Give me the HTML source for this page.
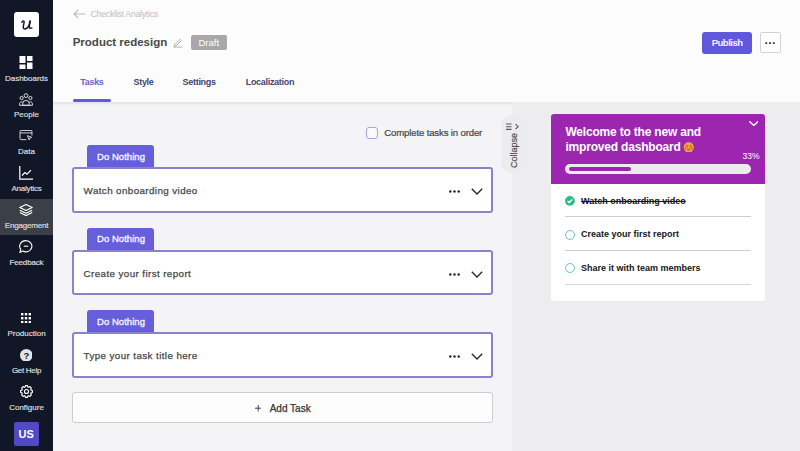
<!DOCTYPE html>
<html><head><meta charset="utf-8">
<style>
*{margin:0;padding:0;box-sizing:border-box}
html,body{width:800px;height:451px;overflow:hidden;background:#f4f4f6;font-family:"Liberation Sans",sans-serif}
.a{position:absolute}
.t{position:absolute;white-space:nowrap;line-height:1}
#side{left:0;top:0;width:53px;height:451px;background:#111726}
.sl{color:#d9dbdf;font-size:8px;left:0;width:53px;text-align:center;-webkit-text-stroke:0.2px #d9dbdf}
.ic{position:absolute;left:19px;width:14px;height:14px}
#hdr{left:53px;top:0;width:747px;height:102px;background:#fcfcfd;box-shadow:0 1.5px 2px rgba(0,0,10,.07)}
#right{left:512px;top:102px;width:288px;height:349px;background:#edecef}
.tab{position:absolute;left:87px;width:67px;height:23px;background:#675edc;border-radius:3px 3px 0 0}
.tabt{color:#f4f3ff;font-size:9.5px;left:97px;letter-spacing:0.05px;-webkit-text-stroke:0.35px #f4f3ff}
.card{position:absolute;left:72px;width:421px;height:45.5px;background:#fff;border:2px solid #8a82cf;border-radius:3px}
.ct{color:#474747;font-size:9.8px;left:83.6px;letter-spacing:0.4px;-webkit-text-stroke:0.25px #474747}
.dots{position:absolute;left:449px;width:11px;height:3px}
.chev{position:absolute;left:471px;width:12px;height:7px}
.li{color:#141414;font-size:9px;font-weight:bold;left:581px}
.circ{position:absolute;left:565px;width:10px;height:10px;border-radius:50%;border:1.2px solid #6cc9a8}
.div{position:absolute;left:565px;width:186px;height:1px;background:#cfcfd2}
</style></head><body>
<div id="side" class="a">
  <div class="a" style="left:14px;top:12px;width:25px;height:25px;background:#fff;border-radius:3px"></div>
  <svg class="a" style="left:20.5px;top:19.5px;width:12px;height:10px" viewBox="0 0 12 10" fill="none" stroke="#111726" stroke-width="1.45" stroke-linecap="round" stroke-linejoin="round"><path d="M0.9 2.3Q1.9 0.6 2.9 1.3Q3.3 1.7 3 2.8L2.3 6.3Q1.9 8.9 4.1 8.9Q6.6 8.9 8 5.3L9.1 1.1"/><path d="M9.1 1.1L8.3 6.6Q7.9 9 10.9 7.9"/></svg>

  <!-- dashboards -->
  <svg class="ic" style="top:56px;height:13px" viewBox="0 0 14 13"><rect x="0.5" y="0" width="6" height="7" fill="#fff"/><rect x="8" y="0" width="5.5" height="5" fill="#fff"/><rect x="0.5" y="8.5" width="6" height="4.5" fill="#fff"/><rect x="8" y="6.5" width="5.5" height="6.5" fill="#fff"/></svg>
  <div class="t sl" style="top:74.5px">Dashboards</div>

  <!-- people -->
  <svg class="ic" style="top:93px;height:13px" viewBox="0 0 14 13" fill="none" stroke="#e2e3e6" stroke-width="0.95"><circle cx="7" cy="2.6" r="1.9"/><circle cx="2.6" cy="5" r="1.6"/><circle cx="11.4" cy="5" r="1.6"/><path d="M3.8 12.3v-2.2a3.2 2.6 0 0 1 6.4 0v2.2z"/><path d="M0.6 12.3v-1.7a2 1.8 0 0 1 3-1.5M13.4 12.3v-1.7a2 1.8 0 0 0 -3-1.5M0.6 12.3h12.8"/></svg>
  <div class="t sl" style="top:111.3px">People</div>

  <!-- data -->
  <svg class="ic" style="top:130.3px;height:11px" viewBox="0 0 14 12" fill="none" stroke="#e2e3e6" stroke-width="1"><path d="M7.5 10.5H1.5a1 1 0 0 1-1-1V1.5a1 1 0 0 1 1-1h11a1 1 0 0 1 1 1v4.5"/><path d="M0.5 3.2h13"/><path d="M8.6 6.2l4.6 1.8-2 .8-.8 2z"/></svg>
  <div class="t sl" style="top:148.1px">Data</div>

  <!-- analytics -->
  <svg class="ic" style="top:166px" viewBox="0 0 14 14" fill="none" stroke="#fff" stroke-width="1.2"><path d="M0.8 0v13.2H14"/><path d="M3 9.5l3-3 2 1.6 4-4"/></svg>
  <div class="t sl" style="top:185.3px;letter-spacing:-0.2px">Analytics</div>

  <div class="a" style="left:0;top:198.5px;width:53px;height:36.8px;background:#3b3f47"></div>
  <!-- engagement -->
  <svg class="ic" style="top:203.5px;height:12px" viewBox="0 0 14 12" fill="none" stroke="#fff" stroke-width="1.1" stroke-linejoin="round"><path d="M7 0.6l6.2 3-6.2 3-6.2-3z"/><path d="M0.8 6.2l6.2 3 6.2-3"/><path d="M0.8 8.6l6.2 3 6.2-3"/></svg>
  <div class="t sl" style="top:222.0px;letter-spacing:-0.2px">Engagement</div>

  <!-- feedback -->
  <svg class="ic" style="top:240px;height:13px" viewBox="0 0 14 13" fill="none" stroke="#fff" stroke-width="1.1"><path d="M7 0.6a6 5.6 0 1 1-3.2 10.4L0.9 12.4l.9-3A6 5.6 0 0 1 7 .6z"/><path d="M4.8 6.2h4.4"/></svg>
  <div class="t sl" style="top:258.5px;letter-spacing:-0.15px">Feedback</div>

  <!-- production -->
  <svg class="ic" style="top:312.5px;left:21px;width:10px;height:10.5px" viewBox="0 0 10 10.5" fill="#fff"><rect x="0" y="0" width="2.4" height="2.4"/><rect x="3.8" y="0" width="2.4" height="2.4"/><rect x="7.6" y="0" width="2.4" height="2.4"/><rect x="0" y="4" width="2.4" height="2.4"/><rect x="3.8" y="4" width="2.4" height="2.4"/><rect x="7.6" y="4" width="2.4" height="2.4"/><rect x="0" y="8" width="2.4" height="2.4"/><rect x="3.8" y="8" width="2.4" height="2.4"/><rect x="7.6" y="8" width="2.4" height="2.4"/></svg>
  <div class="t sl" style="top:330.2px">Production</div>

  <!-- help -->
  <svg class="ic" style="top:348.5px;left:19.8px;width:12.6px;height:12.6px" viewBox="0 0 12.6 12.6"><circle cx="6.3" cy="6.3" r="6.3" fill="#e4e4e7"/><text x="6.3" y="10" text-anchor="middle" font-family="Liberation Sans" font-weight="bold" font-size="9.5" fill="#111726">?</text></svg>
  <div class="t sl" style="top:367.1px;letter-spacing:-0.3px">Get Help</div>

  <!-- configure -->
  <svg class="ic" style="top:385px;left:19.7px;width:13px;height:13px" viewBox="0 0 13 13" fill="none" stroke="#fff" stroke-width="1.15" stroke-linejoin="round"><path d="M10.99 5.11 L12.41 5.48 L12.41 7.52 L10.99 7.89 L10.66 8.69 L11.40 9.96 L9.96 11.40 L8.69 10.66 L7.89 10.99 L7.52 12.41 L5.48 12.41 L5.11 10.99 L4.31 10.66 L3.04 11.40 L1.60 9.96 L2.34 8.69 L2.01 7.89 L0.59 7.52 L0.59 5.48 L2.01 5.11 L2.34 4.31 L1.60 3.04 L3.04 1.60 L4.31 2.34 L5.11 2.01 L5.48 0.59 L7.52 0.59 L7.89 2.01 L8.69 2.34 L9.96 1.60 L11.40 3.04 L10.66 4.31Z"/><circle cx="6.5" cy="6.5" r="2"/></svg>
  <div class="t sl" style="top:403.9px">Configure</div>

  <div class="a" style="left:14px;top:422px;width:24.5px;height:24px;background:#5249c4;border-radius:2px"></div>
  <div class="t" style="left:14px;top:429px;width:24.5px;text-align:center;color:#fff;font-weight:bold;font-size:11px">US</div>
</div>

<div id="hdr" class="a"></div>
<!-- back arrow -->
<svg class="a" style="left:72.5px;top:9px;width:13px;height:10px" viewBox="0 0 13 10" fill="none" stroke="#b9b9bc" stroke-width="1.1"><path d="M12.6 5H1M5.2 0.8L1 5l4.2 4.2"/></svg>
<div class="t" style="left:90.4px;top:10.2px;font-size:9px;letter-spacing:-0.37px;color:#c0c0c3">Checklist Analytics</div>
<div class="t" style="left:72.7px;top:36.5px;font-size:11.5px;font-weight:bold;color:#484848">Product redesign</div>
<svg class="a" style="left:172.5px;top:38px;width:9.5px;height:9.5px" viewBox="0 0 10 10" fill="none" stroke="#9a9a9e" stroke-width="0.9"><path d="M1.5 7.2L7.3 1.4l1.4 1.4L2.9 8.6 1.2 8.9z"/><path d="M0.5 9.6h9" stroke="#aaa"/></svg>
<div class="a" style="left:191px;top:35px;width:36px;height:15px;background:#a8a8aa;border-radius:2px"></div>
<div class="t" style="left:198.5px;top:38.1px;font-size:9.5px;letter-spacing:0px;color:#fff">Draft</div>

<div class="t" style="left:80.2px;top:77.9px;font-size:9px;font-weight:bold;letter-spacing:-0.3px;color:#6b62c9">Tasks</div>
<div class="a" style="left:72.7px;top:99.2px;width:38.3px;height:2.6px;background:#625ad6;border-radius:2px"></div>
<div class="t" style="left:133.5px;top:77.9px;font-size:9px;font-weight:bold;letter-spacing:-0.3px;color:#44446e">Style</div>
<div class="t" style="left:182.6px;top:77.9px;font-size:9px;font-weight:bold;letter-spacing:-0.3px;color:#44446e">Settings</div>
<div class="t" style="left:245.7px;top:77.9px;font-size:9px;font-weight:bold;letter-spacing:-0.3px;color:#44446e">Localization</div>

<div class="a" style="left:702px;top:32px;width:50px;height:22px;background:#6058dc;border-radius:3px"></div>
<div class="t" style="left:711.7px;top:38.1px;font-size:9.5px;font-weight:bold;letter-spacing:-0.5px;color:#f5f4ff">Publish</div>
<div class="a" style="left:760px;top:32px;width:21px;height:21px;background:#fff;border:1px solid #d2d2d6;border-radius:2px"></div>
<svg class="a" style="left:765.4px;top:41.5px;width:10px;height:2.4px" viewBox="0 0 10 2.4" fill="#4a4a4e"><circle cx="1.2" cy="1.2" r="1.1"/><circle cx="5" cy="1.2" r="1.1"/><circle cx="8.8" cy="1.2" r="1.1"/></svg>

<!-- right panel -->
<div id="right" class="a"></div>
<!-- collapse handle -->
<div class="a" style="left:500.5px;top:114.8px;width:20px;height:58.5px;background:#ececef;border-radius:10px 0 0 10px"></div>
<svg class="a" style="left:506px;top:122.5px;width:13px;height:7.5px" viewBox="0 0 13 7.5" fill="none" stroke="#5a5a60" stroke-width="1.1"><path d="M0 1h5.5M0 3.7h5.5M0 6.4h5.5"/><path d="M9.5 1.2l2.6 2.5-2.6 2.5"/></svg>
<svg class="a" style="left:506px;top:132px;width:14px;height:38px" viewBox="0 0 14 38"><text transform="translate(11.3,36) rotate(-90)" font-family="Liberation Sans" font-size="9" fill="#505054" stroke="#505054" stroke-width="0.2">Collapse</text></svg>

<!-- checkbox -->
<div class="a" style="left:366.2px;top:127.3px;width:12.3px;height:12px;border:1.2px solid #a7a1dd;border-radius:3px;background:#fafafc"></div>
<div class="t" style="left:384.3px;top:128.3px;font-size:9.6px;letter-spacing:-0.15px;color:#464646;-webkit-text-stroke:0.2px #464646">Complete tasks in order</div>

<!-- task 1 -->
<div class="tab" style="top:145px"></div>
<div class="t tabt" style="top:152px">Do Nothing</div>
<div class="card" style="top:167px"></div>
<div class="t ct" style="top:185.9px">Watch onboarding video</div>
<svg class="dots" style="top:190px" viewBox="0 0 11 3" fill="#222"><circle cx="1.3" cy="1.5" r="1.2"/><circle cx="5.5" cy="1.5" r="1.2"/><circle cx="9.7" cy="1.5" r="1.2"/></svg>
<svg class="chev" style="top:188px" viewBox="0 0 12 7" fill="none" stroke="#222" stroke-width="1.3"><path d="M0.8 0.8L6 6 11.2 0.8"/></svg>

<!-- task 2 -->
<div class="tab" style="top:227.6px"></div>
<div class="t tabt" style="top:234.4px">Do Nothing</div>
<div class="card" style="top:249.8px"></div>
<div class="t ct" style="top:268.9px">Create your first report</div>
<svg class="dots" style="top:272.7px" viewBox="0 0 11 3" fill="#222"><circle cx="1.3" cy="1.5" r="1.2"/><circle cx="5.5" cy="1.5" r="1.2"/><circle cx="9.7" cy="1.5" r="1.2"/></svg>
<svg class="chev" style="top:270.7px" viewBox="0 0 12 7" fill="none" stroke="#222" stroke-width="1.3"><path d="M0.8 0.8L6 6 11.2 0.8"/></svg>

<!-- task 3 -->
<div class="tab" style="top:310px"></div>
<div class="t tabt" style="top:317px">Do Nothing</div>
<div class="card" style="top:332.1px"></div>
<div class="t ct" style="top:350.9px">Type your task title here</div>
<svg class="dots" style="top:355px" viewBox="0 0 11 3" fill="#222"><circle cx="1.3" cy="1.5" r="1.2"/><circle cx="5.5" cy="1.5" r="1.2"/><circle cx="9.7" cy="1.5" r="1.2"/></svg>
<svg class="chev" style="top:353px" viewBox="0 0 12 7" fill="none" stroke="#222" stroke-width="1.3"><path d="M0.8 0.8L6 6 11.2 0.8"/></svg>

<!-- add task -->
<div class="a" style="left:72px;top:392.3px;width:421px;height:30.5px;background:#fdfdfd;border:1px solid #cdcdd0;border-radius:3px"></div>
<svg class="a" style="left:254.7px;top:405.3px;width:6.4px;height:6.4px" viewBox="0 0 6.4 6.4" stroke="#333" stroke-width="0.9"><path d="M3.2 0v6.4M0 3.2h6.4"/></svg>
<div class="t" style="left:269.7px;top:404.2px;font-size:10px;color:#333;-webkit-text-stroke:0.25px #333">Add Task</div>

<!-- checklist preview -->
<div class="a" style="left:550.7px;top:114.2px;width:214.6px;height:186.5px;background:#fff;border-radius:3px;overflow:hidden">
  <div class="a" style="left:0;top:0;width:215px;height:69.6px;background:#9d26b0"></div>
</div>
<div class="t" style="left:565.4px;top:125px;font-size:12px;font-weight:bold;letter-spacing:-0.19px;color:#fff;line-height:15px">Welcome to the new and<br>improved dashboard</div>
<svg class="a" style="left:683px;top:141.5px;width:11.5px;height:10.5px" viewBox="0 0 12 11"><circle cx="6" cy="5.5" r="5.2" fill="#f7b733"/><circle cx="6" cy="6.2" r="4.8" fill="#f59a3a"/><path d="M3 4.5q1-1 2 0M7 4.5q1-1 2 0" stroke="#6b3a10" stroke-width=".8" fill="none"/><path d="M4.5 7.5q1.5 1.2 3 0" stroke="#6b3a10" stroke-width=".8" fill="none"/><circle cx="2.8" cy="6.6" r="1" fill="#e8584f"/><circle cx="9.2" cy="6.6" r="1" fill="#e8584f"/></svg>
<svg class="a" style="left:748.8px;top:121.3px;width:9.5px;height:5px" viewBox="0 0 9.5 5" fill="none" stroke="#fff" stroke-width="1.4"><path d="M0.4 0.4L4.75 4.5 9.1 0.4"/></svg>
<div class="t" style="left:742.6px;top:151.6px;font-size:8.5px;color:#fff">33%</div>
<div class="a" style="left:565.4px;top:164px;width:185.4px;height:10px;background:#ececef;border-radius:5px"></div>
<div class="a" style="left:569px;top:167px;width:62px;height:4.2px;background:#9d26b0;border-radius:2px"></div>

<!-- items -->
<svg class="a" style="left:565px;top:196.2px;width:9.8px;height:9.8px" viewBox="0 0 10 10"><circle cx="5" cy="5" r="5" fill="#2dbb85"/><path d="M2.6 5.1l1.7 1.6 3.1-3.1" stroke="#fff" stroke-width="1.35" fill="none"/></svg>
<div class="t li" style="top:196.6px;text-decoration:line-through">Watch onboarding video</div>
<div class="div" style="top:216px"></div>
<div class="circ" style="top:230.2px"></div>
<div class="t li" style="top:230px">Create your first report</div>
<div class="div" style="top:250.2px"></div>
<div class="circ" style="top:263.3px"></div>
<div class="t li" style="top:263.7px">Share it with team members</div>
<div class="div" style="top:283.5px;height:1.5px;background:#d6d6d9"></div>
</body></html>
